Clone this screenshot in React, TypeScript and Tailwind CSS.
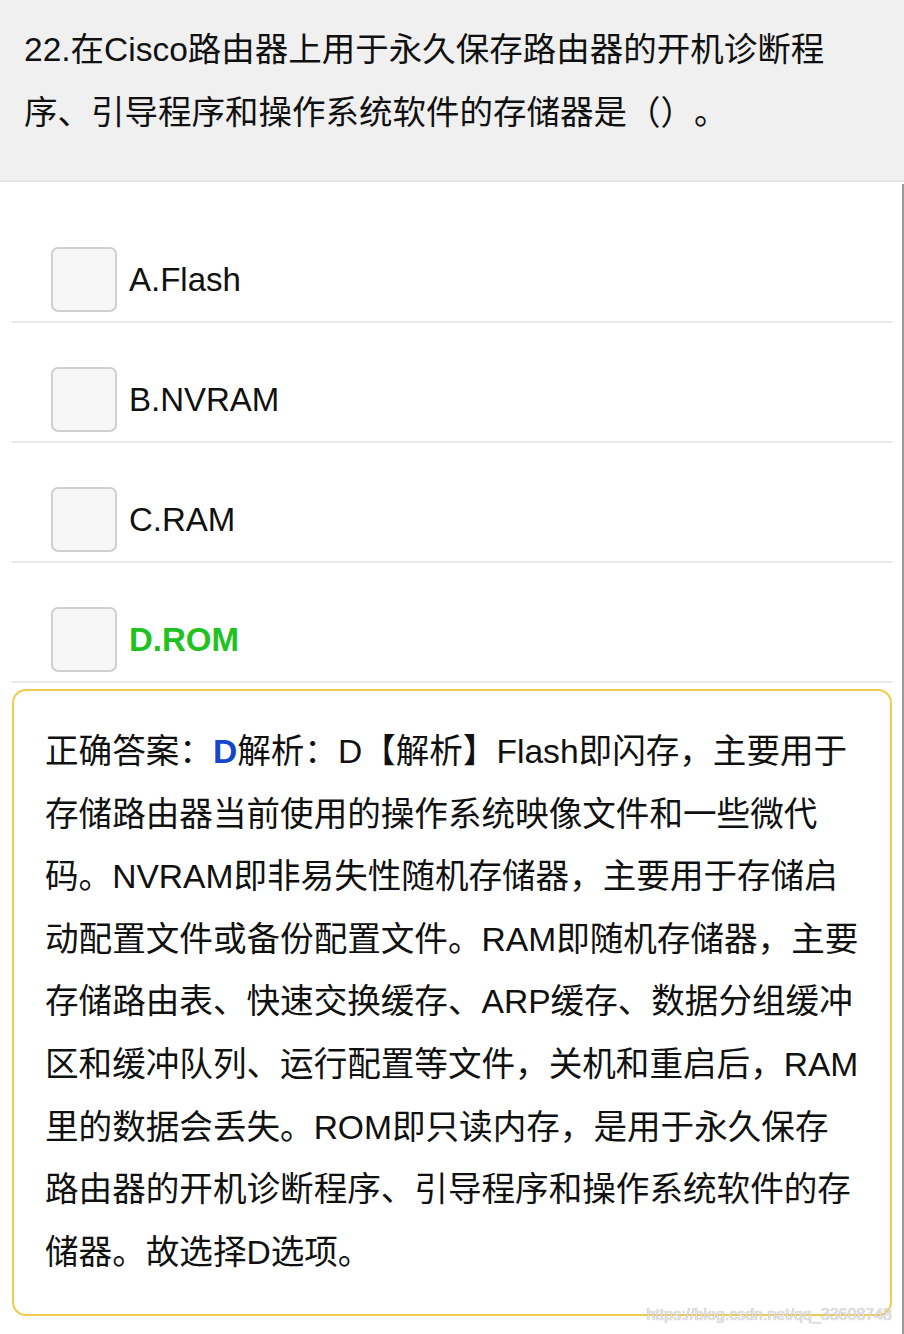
import React from "react";

type Option = {
  key: string;
  label: string;
  correct?: boolean;
};

const options: Option[] = [
  { key: "A", label: "A.Flash" },
  { key: "B", label: "B.NVRAM" },
  { key: "C", label: "C.RAM" },
  { key: "D", label: "D.ROM", correct: true },
];

const font = "font-['Liberation_Sans','Noto_Sans_CJK_SC',sans-serif] [text-spacing-trim:space-all]";

export default function App() {
  return (
    <div className={`relative min-h-[1334px] w-[904px] bg-white ${font} text-[#111]`}>
      <div className="border-b-2 border-[#e4e4e4] bg-[#f0f0f0] pb-[36px] pl-[24px] pr-[40px] pt-[18px]">
        <p className="text-[33.5px] leading-[63px]">
          22.在Cisco路由器上用于永久保存路由器的开机诊断程序、引导程序和操作系统软件的存储器是（）。
        </p>
      </div>

      <div className="pt-[21px]">
        {options.map((opt) => (
          <div key={opt.key} className="mx-[12px] border-b-2 border-[#e8e8e8] pb-[9px] pt-[44px]">
            <div className="flex items-center gap-[12px] pl-[39px]">
              <div className="h-[65px] w-[66px] rounded-[7px] border-2 border-[#cfcfcf] bg-[#f7f7f7]" />
              <span
                className={
                  opt.correct
                    ? "text-[33px] font-bold text-[#1fc21f]"
                    : "text-[33px] text-[#111]"
                }
              >
                {opt.label}
              </span>
            </div>
          </div>
        ))}

        <div className="mx-[12px] mb-[16px] mt-[6px] rounded-[14px] border-2 border-[#f1cb4f] pb-[30px] pl-[31px] pr-[30px] pt-[30px]">
          <p className="text-[33.6px] leading-[62.6px]">
            正确答案：<span className="font-bold text-[#1446cc]">D</span>解析：D【解析】Flash即闪存，主要用于存储路由器当前使用的操作系统映像文件和一些微代码。NVRAM即非易失性随机存储器，主要用于存储启动配置文件或备份配置文件。RAM即随机存储器，主要存储路由表、快速交换缓存、ARP缓存、数据分组缓冲区和缓冲队列、运行配置等文件，关机和重启后，RAM里的数据会丢失。ROM即只读内存，是用于永久保存路由器的开机诊断程序、引导程序和操作系统软件的存储器。故选择D选项。
          </p>
        </div>
      </div>

      <div className="absolute bottom-0 right-0 top-[184px] w-[2px] bg-[#9a9a9a]" />

      <span className="absolute right-[12px] top-[1303px] text-[16px] text-[#e6e6e6] [text-shadow:0_0_1px_#9a9a9a]">
        https://blog.csdn.net/qq_33608748
      </span>
    </div>
  );
}
